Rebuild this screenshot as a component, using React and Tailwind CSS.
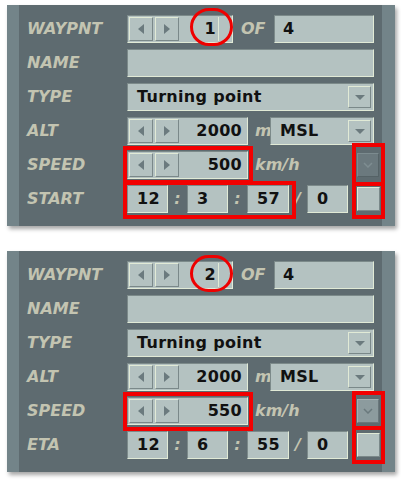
import React from "react";

const font = { fontFamily: '"DejaVu Sans", "Liberation Sans", sans-serif' };

const FIELD =
  "bg-[#b4c2c1] border border-t-[#7c8a8a] border-l-[#7c8a8a] border-b-[#e1ead6] border-r-[#e1ead6]";
const BTN =
  "bg-[#b4c2c1] border border-t-[#e1ead6] border-l-[#e1ead6] border-b-[#7a8889] border-r-[#7a8889]";
const LABEL = "italic font-bold text-[#c3c4b1] text-[16px]";
const VALUE = "font-bold text-[#111] text-[16px] tracking-[0.3px]";

function Tri({ dir }) {
  const pts = dir === "left" ? "6,0 6,10 0,5" : dir === "right" ? "0,0 0,10 6,5" : "0,0 10,0 5,5";
  const w = dir === "down" ? 10 : 6;
  const h = dir === "down" ? 5 : 10;
  return (
    <svg width={w} height={h} viewBox={`0 0 ${w} ${h}`}>
      <polygon points={pts} fill="#6b7a7e" />
    </svg>
  );
}

function Spin({ value, width, caret }) {
  return (
    <div className={`${FIELD} h-[28px] flex items-center relative`} style={{ width }}>
      <div className={`${BTN} w-[24px] h-[24px] ml-[1px] flex items-center justify-center`}>
        <Tri dir="left" />
      </div>
      <div className={`${BTN} w-[24px] h-[24px] ml-[2px] flex items-center justify-center`}>
        <Tri dir="right" />
      </div>
      <div className={`flex-1 text-right ${VALUE} ${caret ? "pr-[16px]" : "pr-[5px]"}`}>{value}</div>
      {caret && <div className="absolute left-[90px] top-[1px] bottom-[1px] w-[1px] bg-[#e1ead6]" />}
    </div>
  );
}

function Dropdown({ value, width }) {
  return (
    <div className={`${FIELD} h-[28px] flex items-center pl-[9px] pr-[2px]`} style={{ width }}>
      <div className={`flex-1 ${VALUE}`}>{value}</div>
      <div className={`${BTN} w-[23px] h-[22px] flex items-center justify-center`}>
        <Tri dir="down" />
      </div>
    </div>
  );
}

function Box({ value, width, pl = 9 }) {
  return (
    <div className={`${FIELD} h-[28px] flex items-center ${VALUE}`} style={{ width, paddingLeft: pl }}>
      {value}
    </div>
  );
}

function Row({ label, children }) {
  return (
    <div className="flex items-center h-[28px]">
      <div className={`${LABEL} w-[108px] pl-[8px]`}>{label}</div>
      <div className="flex items-center">{children}</div>
    </div>
  );
}

function Panel({ wp, speed, lastLabel, time, dark }) {
  return (
    <div className="flex w-[388px] h-[221px] bg-[#5e6b70] shadow-[2px_3px_4px_rgba(0,0,0,0.35)]">
      <div className="w-[12px] bg-[#738489]" />
      <div className="flex-1 flex flex-col gap-[6px] pt-[10px]">
        <Row label="WAYPNT">
          <Spin value={wp} width={106} caret />
          <div className={`${LABEL} ml-[8px] w-[33px]`}>OF</div>
          <Box value="4" width={100} pl={8} />
        </Row>
        <Row label="NAME">
          <Box value="" width={247} />
        </Row>
        <Row label="TYPE">
          <Dropdown value="Turning point" width={247} />
        </Row>
        <Row label="ALT">
          <Spin value="2000" width={121} />
          <div className={`${LABEL} w-[22px] pl-[7px]`}>m</div>
          <Dropdown value="MSL" width={104} />
        </Row>
        <Row label="SPEED">
          <Spin value={speed} width={121} />
          <div className={`${LABEL} ml-[7px] w-[102px]`}>km/h</div>
          <div
            className={`w-[22px] h-[24px] flex items-center justify-center border ${
              dark
                ? "bg-[#6b797e] border-t-[#7c8b8f] border-l-[#7c8b8f] border-b-[#556266] border-r-[#556266]"
                : "bg-[#8c9b9e] border-t-[#a3b1b2] border-l-[#a3b1b2] border-b-[#6a777b] border-r-[#6a777b]"
            }`}
          >
            <svg width="10" height="6" viewBox="0 0 10 6">
              <polyline
                points="1,1 5,5 9,1"
                fill="none"
                stroke={dark ? "#7e8d91" : "#6a797d"}
                strokeWidth="1.5"
              />
            </svg>
          </div>
        </Row>
        <Row label={lastLabel}>
          <Box value={time[0]} width={41} />
          <div className={`${LABEL} w-[19px] text-center`}>:</div>
          <Box value={time[1]} width={41} />
          <div className={`${LABEL} w-[19px] text-center`}>:</div>
          <Box value={time[2]} width={42} />
          <div className={`${LABEL} w-[18px] text-center`}>/</div>
          <Box value="0" width={41} />
          <div className={`${BTN} w-[23px] h-[24px] ml-[9px]`} />
        </Row>
      </div>
      <div className="w-[13px] bg-[#738489]" />
    </div>
  );
}

export default function App() {
  return (
    <div className="relative w-[401px] h-[480px] bg-white pt-[5px] pl-[7px] flex flex-col gap-[25px]" style={font}>
      <Panel wp="1" speed="500" lastLabel="START" time={["12", "3", "57"]} dark />
      <Panel wp="2" speed="550" lastLabel="ETA" time={["12", "6", "55"]} />

      {/* annotations panel 1 */}
      <div className="absolute left-[190px] top-[8px] w-[43px] h-[38px] rounded-full border-[3px] border-[#ee0000]" />
      <div className="absolute left-[123px] top-[146px] w-[130px] h-[38px] border-[4px] border-[#f20000]" />
      <div className="absolute left-[123px] top-[181px] w-[173px] h-[38px] border-[4px] border-[#f20000]" />
      <div className="absolute left-[352px] top-[143px] w-[33px] h-[43px] border-[4px] border-[#f20000]" />
      <div className="absolute left-[352px] top-[182px] w-[33px] h-[37px] border-[4px] border-[#f20000]" />

      {/* annotations panel 2 */}
      <div className="absolute left-[190px] top-[255px] w-[43px] h-[37px] rounded-full border-[3px] border-[#ee0000]" />
      <div className="absolute left-[123px] top-[392px] w-[130px] h-[39px] border-[4px] border-[#f20000]" />
      <div className="absolute left-[352px] top-[391px] w-[33px] h-[39px] border-[4px] border-[#f20000]" />
      <div className="absolute left-[352px] top-[426px] w-[33px] h-[38px] border-[4px] border-[#f20000]" />
    </div>
  );
}
